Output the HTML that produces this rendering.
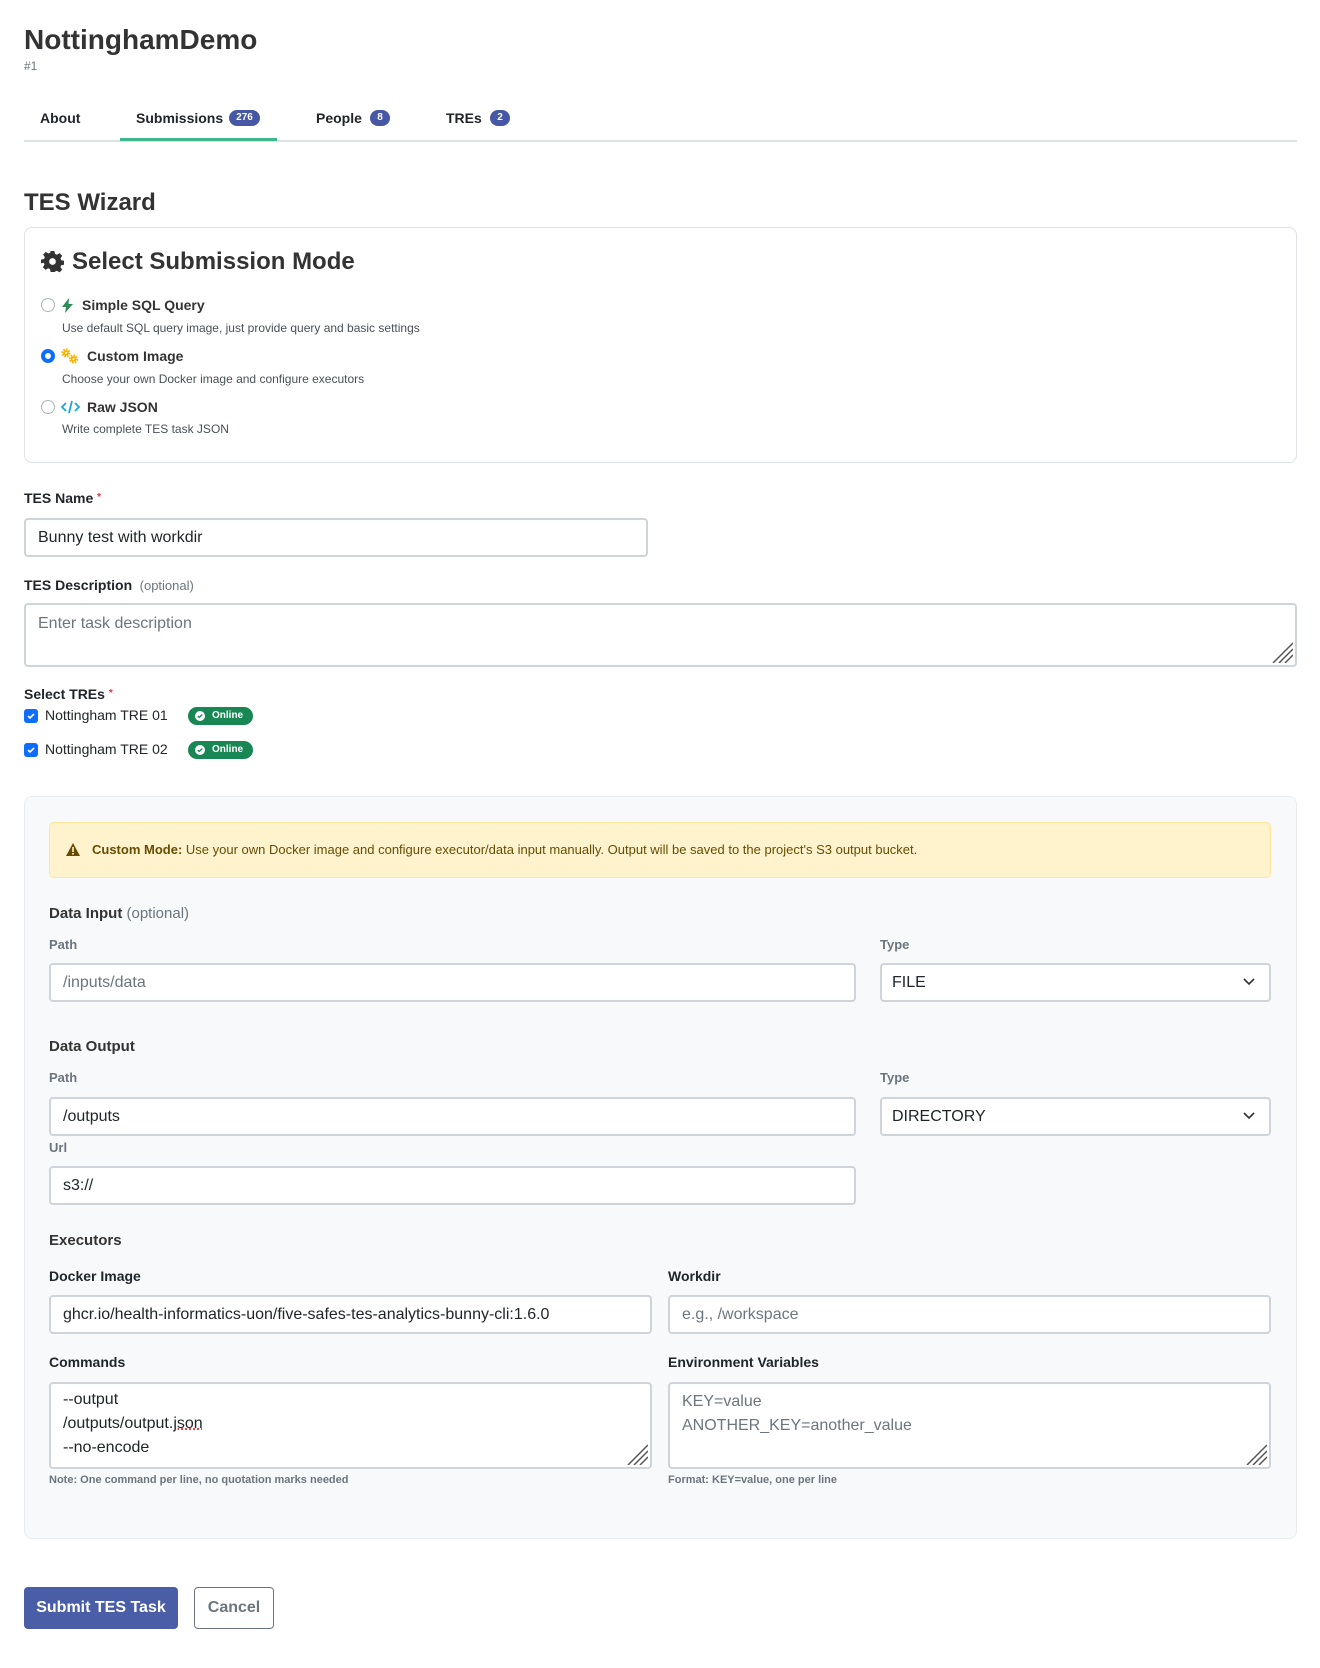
<!DOCTYPE html>
<html><head><meta charset="utf-8"><style>
*{box-sizing:border-box;margin:0;padding:0}
body{width:1320px;height:1668px;background:#fff;font-family:"Liberation Sans",Arial,sans-serif;color:#212529;position:relative;overflow:hidden}
.a{position:absolute;white-space:nowrap}
.b{font-weight:bold}
.badge{position:absolute;background:#4657a6;color:#fff;font-size:10px;font-weight:bold;border-radius:9px;height:16px;line-height:16px;text-align:center}
.lbl{font-size:14px;font-weight:bold;color:#212529}
.glbl{font-size:13px;font-weight:bold;color:#6c757d}
.inp{position:absolute;background:#fff;border:2px solid #ced4da;border-radius:4px;font-size:16px;padding-left:12px;display:flex;align-items:center;color:#212529}
.ph{color:#6c757d}
.chev{position:absolute;right:14px;top:50%;margin-top:-5px}
.radio{position:absolute;width:14px;height:14px;border-radius:50%;border:1.5px solid #adb5bd;background:#fff}
.desc{font-size:12px;color:#495057}
.cb{position:absolute;width:14px;height:14px;border-radius:3px;background:#0d6efd}
.online{position:absolute;background:#198754;color:#fff;font-size:10px;font-weight:bold;border-radius:9px;height:18px;width:65px;line-height:18px;padding-left:24px}
.online svg{position:absolute;left:7px;top:4px}
.note{font-size:11px;font-weight:bold;color:#6c757d}
.grip{position:absolute;right:2px;bottom:2px}
.req{color:#dc3545;font-size:10px;position:relative;top:-3px}
</style></head><body>

<div class="a b" style="left:24px;top:24px;font-size:28px;color:#333">NottinghamDemo</div>
<div class="a" style="left:24px;top:59px;font-size:12px;color:#6c757d">#1</div>

<div class="a b" style="left:40px;top:110px;font-size:14px">About</div>
<div class="a b" style="left:136px;top:110px;font-size:14px">Submissions</div>
<div class="badge" style="left:229px;top:110px;width:31px">276</div>
<div class="a b" style="left:316px;top:110px;font-size:14px">People</div>
<div class="badge" style="left:370px;top:110px;width:20px">8</div>
<div class="a b" style="left:446px;top:110px;font-size:14px">TREs</div>
<div class="badge" style="left:490px;top:110px;width:20px">2</div>
<div class="a" style="left:24px;top:140px;width:1273px;height:2px;background:#dee2e6"></div>
<div class="a" style="left:120px;top:138px;width:157px;height:3px;background:#3fb68b"></div>

<div class="a b" style="left:24px;top:189px;font-size:24px;color:#333">TES Wizard</div>

<div class="a" style="left:24px;top:227px;width:1273px;height:236px;border:1px solid #dee2e6;border-radius:8px"></div>
<svg class="a" style="left:41px;top:250px" width="23" height="23" viewBox="0 0 24 24"><path fill="#333" d="M10 1h4l.6 3.1 2 .9 2.7-1.8 2.8 2.8-1.8 2.7.9 2 3.1.6v4l-3.1.6-.9 2 1.8 2.7-2.8 2.8-2.7-1.8-2 .9L14 23h-4l-.6-3.1-2-.9-2.7 1.8-2.8-2.8 1.8-2.7-.9-2L0 14v-4l3.1-.6.9-2-1.8-2.7 2.8-2.8 2.7 1.8 2-.9zM12 8.5a3.5 3.5 0 100 7 3.5 3.5 0 000-7z"/></svg>
<div class="a b" style="left:72px;top:248px;font-size:24px;color:#333">Select Submission Mode</div>

<div class="radio" style="left:41px;top:298px"></div>
<svg class="a" style="left:62px;top:298px" width="11" height="15" viewBox="0 0 11 15"><path fill="#2e8b57" d="M7 0L0 9h4l-1 6 8-9H6.5z"/></svg>
<div class="a b" style="left:82px;top:297px;font-size:14px;color:#333">Simple SQL Query</div>
<div class="a desc" style="left:62px;top:321px">Use default SQL query image, just provide query and basic settings</div>

<div class="radio" style="left:41px;top:349px;border:4px solid #0d6efd"></div>
<svg class="a" style="left:61px;top:348px" width="18" height="16" viewBox="0 0 18 16"><circle cx="5" cy="5" r="2.8" fill="#f5b400"/><circle cx="5" cy="5" r="3.6" fill="none" stroke="#f5b400" stroke-width="2" stroke-dasharray="1.6 1.2"/><circle cx="5" cy="5" r="1" fill="#fff"/><circle cx="12.5" cy="11" r="2.8" fill="#f5b400"/><circle cx="12.5" cy="11" r="3.6" fill="none" stroke="#f5b400" stroke-width="2" stroke-dasharray="1.6 1.2"/><circle cx="12.5" cy="11" r="1" fill="#fff"/></svg>
<div class="a b" style="left:87px;top:348px;font-size:14px;color:#333">Custom Image</div>
<div class="a desc" style="left:62px;top:372px">Choose your own Docker image and configure executors</div>

<div class="radio" style="left:41px;top:400px"></div>
<svg class="a" style="left:61px;top:400px" width="19" height="14" viewBox="0 0 19 14"><path fill="none" stroke="#1aa7d8" stroke-width="1.8" d="M5 3L1 7l4 4M14 3l4 4-4 4M11 1L8 13"/></svg>
<div class="a b" style="left:87px;top:399px;font-size:14px;color:#333">Raw JSON</div>
<div class="a desc" style="left:62px;top:422px">Write complete TES task JSON</div>

<div class="a lbl" style="left:24px;top:490px">TES Name <span class="req">*</span></div>
<div class="inp" style="left:24px;top:518px;width:624px;height:39px">Bunny test with workdir</div>

<div class="a lbl" style="left:24px;top:577px">TES Description <span style="font-weight:normal;color:#6c757d;font-size:13px">&nbsp;(optional)</span></div>
<div class="inp" style="left:24px;top:603px;width:1273px;height:64px;align-items:flex-start;padding-top:10px"><span class="ph">Enter task description</span>
<svg class="grip" width="22" height="22" viewBox="0 0 22 22"><path stroke="#555" stroke-width="1.5" d="M2 22L22 2M8 22L22 8M14 22L22 14"/></svg></div>

<div class="a lbl" style="left:24px;top:686px">Select TREs <span class="req">*</span></div>
<div class="cb" style="left:24px;top:709px"><svg width="14" height="14"><path d="M4 7l2 2 4-4" stroke="#fff" stroke-width="1.6" fill="none"/></svg></div>
<div class="a" style="left:45px;top:707px;font-size:14px">Nottingham TRE 01</div>
<div class="online" style="left:188px;top:707px"><svg width="10" height="10"><circle cx="5" cy="5" r="5" fill="#fff"/><path d="M2.8 5l1.5 1.5 3-3" stroke="#198754" stroke-width="1.3" fill="none"/></svg>Online</div>
<div class="cb" style="left:24px;top:743px"><svg width="14" height="14"><path d="M4 7l2 2 4-4" stroke="#fff" stroke-width="1.6" fill="none"/></svg></div>
<div class="a" style="left:45px;top:741px;font-size:14px">Nottingham TRE 02</div>
<div class="online" style="left:188px;top:741px"><svg width="10" height="10"><circle cx="5" cy="5" r="5" fill="#fff"/><path d="M2.8 5l1.5 1.5 3-3" stroke="#198754" stroke-width="1.3" fill="none"/></svg>Online</div>

<div class="a" style="left:24px;top:796px;width:1273px;height:743px;background:#f8f9fa;border:1px solid #e9ecef;border-radius:8px"></div>

<div class="a" style="left:49px;top:822px;width:1222px;height:56px;background:#fff3cd;border:1px solid #ffe69c;border-radius:5px"></div>
<svg class="a" style="left:66px;top:843px" width="14" height="13" viewBox="0 0 14 13"><path fill="#664d03" d="M7 0l7 13H0z"/><rect x="6.2" y="4" width="1.6" height="5" fill="#fff3cd"/><rect x="6.2" y="10" width="1.6" height="1.6" fill="#fff3cd"/></svg>
<div class="a" style="left:92px;top:842px;font-size:13px;color:#664d03"><b>Custom Mode:</b> Use your own Docker image and configure executor/data input manually. Output will be saved to the project's S3 output bucket.</div>

<div class="a b" style="left:49px;top:905px;font-size:15px;color:#333">Data Input <span style="font-weight:normal;color:#6c757d">(optional)</span></div>
<div class="a glbl" style="left:49px;top:937px">Path</div>
<div class="a glbl" style="left:880px;top:937px">Type</div>
<div class="inp" style="left:49px;top:963px;width:807px;height:39px"><span class="ph">/inputs/data</span></div>
<div class="inp" style="left:880px;top:963px;width:391px;height:39px;padding-left:10px">FILE<svg class="chev" width="12" height="8"><path d="M1 1l5 5 5-5" stroke="#333" stroke-width="1.6" fill="none"/></svg></div>

<div class="a b" style="left:49px;top:1038px;font-size:15px;color:#333">Data Output</div>
<div class="a glbl" style="left:49px;top:1070px">Path</div>
<div class="a glbl" style="left:880px;top:1070px">Type</div>
<div class="inp" style="left:49px;top:1097px;width:807px;height:39px">/outputs</div>
<div class="inp" style="left:880px;top:1097px;width:391px;height:39px;padding-left:10px">DIRECTORY<svg class="chev" width="12" height="8"><path d="M1 1l5 5 5-5" stroke="#333" stroke-width="1.6" fill="none"/></svg></div>
<div class="a glbl" style="left:49px;top:1140px">Url</div>
<div class="inp" style="left:49px;top:1166px;width:807px;height:39px">s3://</div>

<div class="a b" style="left:49px;top:1232px;font-size:15px;color:#333">Executors</div>
<div class="a lbl" style="left:49px;top:1268px">Docker Image</div>
<div class="a lbl" style="left:668px;top:1268px">Workdir</div>
<div class="inp" style="left:49px;top:1295px;width:603px;height:39px">ghcr.io/health-informatics-uon/five-safes-tes-analytics-bunny-cli:1.6.0</div>
<div class="inp" style="left:668px;top:1295px;width:603px;height:39px"><span class="ph">e.g., /workspace</span></div>

<div class="a lbl" style="left:49px;top:1354px">Commands</div>
<div class="a lbl" style="left:668px;top:1354px">Environment Variables</div>
<div class="inp" style="left:49px;top:1382px;width:603px;height:87px;display:block;overflow:hidden;padding-top:0">
<div style="position:absolute;left:12px;top:-20px;line-height:24px">/outputs/xxxx.json<br>--output<br>/outputs/output.<span style="text-decoration:underline dotted #d00">json</span><br>--no-encode</div>
<svg class="grip" width="22" height="22" viewBox="0 0 22 22"><path stroke="#555" stroke-width="1.5" d="M2 22L22 2M8 22L22 8M14 22L22 14"/></svg></div>
<div class="inp" style="left:668px;top:1382px;width:603px;height:87px;display:block;padding-top:6px;line-height:24px"><span class="ph">KEY=value<br>ANOTHER_KEY=another_value</span>
<svg class="grip" width="22" height="22" viewBox="0 0 22 22"><path stroke="#555" stroke-width="1.5" d="M2 22L22 2M8 22L22 8M14 22L22 14"/></svg></div>
<div class="a note" style="left:49px;top:1474px">Note: One command per line, no quotation marks needed</div>
<div class="a note" style="left:668px;top:1474px">Format: KEY=value, one per line</div>

<div class="a b" style="left:24px;top:1587px;width:154px;height:42px;background:#4a5ea8;border-radius:4px;color:#fff;font-size:16px;line-height:42px;text-align:center">Submit TES Task</div>
<div class="a b" style="left:194px;top:1587px;width:80px;height:42px;border:1px solid #6c757d;border-radius:4px;color:#6c757d;font-size:16px;line-height:40px;text-align:center">Cancel</div>
</body></html>
